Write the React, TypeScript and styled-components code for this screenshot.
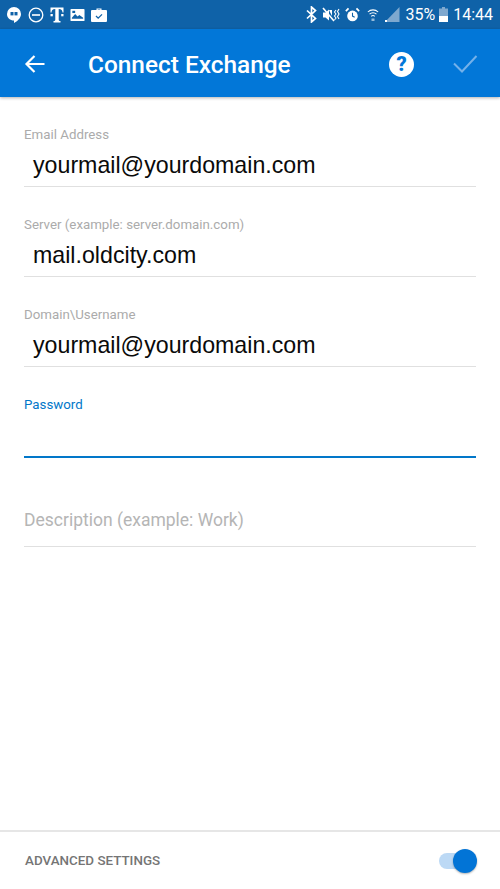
import { createGlobalStyle, styled } from "styled-components";

const GlobalStyle = createGlobalStyle`
  html, body {
    margin: 0;
    padding: 0;
    background: #fff;
  }
  body {
    font-family: Roboto, "Liberation Sans", sans-serif;
  }
`;

interface FieldProps {
  label: string;
  value?: string;
  focused?: boolean;
}

const Field = ({ label, value, focused }: FieldProps) => (
  <FieldBox $focused={focused}>
    <FieldLabel $focused={focused}>{label}</FieldLabel>
    <FieldValue>{value}</FieldValue>
  </FieldBox>
);

export default function App() {
  return (
    <Screen>
      <GlobalStyle />
      <StatusBar>
        <StatusGroup>
          <svg width="16" height="18" viewBox="0 0 16 18">
            <path d="M8 1a7 7 0 0 0-7 7c0 3.9 3.1 6.6 7 6.6V17c3.4-1.700 7-5 7-9a7 7 0 0 0-7-7z" fill="#fff" />
            <rect x="4.500" y="6" width="3" height="3.400" fill="#0f62a8" />
            <rect x="8.500" y="6" width="3" height="3.400" fill="#0f62a8" />
          </svg>
          <svg width="16" height="16" viewBox="0 0 16 16">
            <circle cx="8" cy="8" r="6.800" fill="none" stroke="#fff" strokeWidth="1.300" />
            <rect x="4" y="7.200" width="8" height="1.600" fill="#fff" />
          </svg>
          <svg width="14" height="16" viewBox="0 0 14 16">
            <path d="M0.500 0.500h13v5h-1c0-2-1-3.300-3.800-3.500v10.500c0 1.200.5 1.500 1.800 1.500v1.500h-7v-1.500c1.300 0 1.800-.3 1.800-1.500V2C2.500 2.200 1.500 3.500 1.500 5.500h-1z" fill="#fff" />
            <rect x="0.500" y="7" width="2.300" height="2.300" fill="#fff" />
            <rect x="11.200" y="7" width="2.300" height="2.300" fill="#fff" />
          </svg>
          <svg width="15" height="14" viewBox="0 0 16 14">
            <rect x="0.500" y="0.500" width="15" height="13" rx="1" fill="#fff" />
            <path d="M2 10l3.500-4 2.500 2.500 2-1.500 4 3v1H2z" fill="#0f62a8" />
            <rect x="2.500" y="2.500" width="3" height="2.400" fill="#0f62a8" />
          </svg>
          <svg width="16" height="16" viewBox="0 0 16 16">
            <path d="M5.500 3V1.500h5V3H15a1 1 0 0 1 1 1v10a1 1 0 0 1-1 1H1a1 1 0 0 1-1-1V4a1 1 0 0 1 1-1zM6.700 3h2.600v-.6H6.700z" fill="#fff" />
            <path d="M5 9l2.200 2.200L11 7.400" fill="none" stroke="#0f62a8" strokeWidth="1.300" />
          </svg>
        </StatusGroup>
        <StatusGroup $right>
          <svg width="11" height="17" viewBox="0 0 11 17">
            <path d="M1 4.500l8.500 8L5.500 16V1l4 3.500-8.500 8" fill="none" stroke="#fff" strokeWidth="1.700" />
          </svg>
          <svg width="18" height="16" viewBox="0 0 18 16">
            <path d="M1 1l11 13" stroke="#fff" strokeWidth="1.600" />
            <path d="M1 5.500h2.500L7 2.500v11L3.500 10.500H1zM7 3h3v6z" fill="#fff" />
            <path d="M14 3l-1.500 2 1.500 2-1.500 2 1.500 2-1.500 2M17 2l-1.500 2.500 1.500 2.500-1.500 2.500 1.500 2.500" fill="none" stroke="#fff" strokeWidth="1.100" />
          </svg>
          <svg width="15" height="16" viewBox="0 0 17 17">
            <circle cx="8.500" cy="9.500" r="6" fill="#fff" />
            <path d="M8.500 6v3.700l2.500 1.300" fill="none" stroke="#0f62a8" strokeWidth="1.200" />
            <path d="M1 4l3-3M16 4l-3-3" stroke="#fff" strokeWidth="2" />
          </svg>
          <WifiSlot>
            <svg width="12" height="16" viewBox="0 0 14 17">
              <path d="M1 5a8.500 8.500 0 0 1 12 0M3 7.500a5.500 5.500 0 0 1 8 0M5 10a2.800 2.800 0 0 1 4 0" fill="none" stroke="#fff" strokeWidth="1.200" />
              <path d="M5.500 12.500h1v3h-1zM7.500 12.500h1v3h-1z" fill="#fff" />
            </svg>
          </WifiSlot>
          <svg width="16" height="17" viewBox="0 0 16 17">
            <path d="M15.500 1v15H1z" fill="#7ea8cf" />
            <path d="M1 14h2v2H1z" fill="#fff" />
          </svg>
          <StatusText>35%</StatusText>
          <BatterySlot>
            <svg width="9" height="15" viewBox="0 0 9 15">
              <path d="M3 0h3v1.500h3V15H0V1.500h3z" fill="#7ea8cf" />
              <path d="M0 9h9v6H0z" fill="#fff" />
            </svg>
          </BatterySlot>
          <StatusText>14:44</StatusText>
        </StatusGroup>
      </StatusBar>

      <AppBar>
        <BackButton>
          <svg width="22" height="20" viewBox="0 0 22 20">
            <path d="M20.500 10H2.500M10.500 2l-8 8 8 8" fill="none" stroke="#fff" strokeWidth="2.200" />
          </svg>
        </BackButton>
        <Title>Connect Exchange</Title>
        <HelpIcon>?</HelpIcon>
        <DoneButton>
          <svg width="26" height="20" viewBox="0 0 26 20">
            <path d="M2 9.500l8 8L24.500 2" fill="none" stroke="#74b1ea" strokeWidth="2" />
          </svg>
        </DoneButton>
      </AppBar>

      <Form>
        <Field label="Email Address" value="yourmail@yourdomain.com" />
        <Field label="Server (example: server.domain.com)" value="mail.oldcity.com" />
        <Field label="Domain\Username" value="yourmail@yourdomain.com" />
        <Field label="Password" focused />
        <Placeholder>Description (example: Work)</Placeholder>
      </Form>

      <Footer>
        <FooterLabel>ADVANCED SETTINGS</FooterLabel>
        <Toggle>
          <ToggleKnob />
        </Toggle>
      </Footer>
    </Screen>
  );
}

const Screen = styled.div`
  width: 500px;
  height: 889px;
  display: flex;
  flex-direction: column;
  background: #fff;
  overflow: hidden;
`;

const StatusBar = styled.header`
  height: 29px;
  flex: none;
  display: flex;
  align-items: center;
  justify-content: space-between;
  padding: 0 7px 0 6px;
  background: #0f62a8;
  color: #fff;
`;

const StatusGroup = styled.div<{ $right?: boolean }>`
  display: flex;
  align-items: center;
  gap: ${(p) => (p.$right ? "5px" : "6px")};
`;

const WifiSlot = styled.span`
  display: flex;
  margin-left: 2px;
`;

const BatterySlot = styled.span`
  display: flex;
  margin-left: -1px;
`;

const StatusText = styled.span`
  font-size: 16px;
  line-height: 20px;
`;

const AppBar = styled.div`
  height: 68px;
  flex: none;
  box-sizing: border-box;
  display: flex;
  align-items: center;
  padding: 2px 22px 0 24px;
  background: #0277d8;
  box-shadow: 0 1px 3px rgba(0, 0, 0, 0.3);
  color: #fff;
`;

const IconButton = styled.span`
  display: flex;
  align-items: center;
  justify-content: center;
`;

const BackButton = styled(IconButton)`
  margin-right: 42px;
`;

const Title = styled.h1`
  flex: 1;
  margin: 0;
  font-size: 24.400px;
  font-weight: 500;
`;

const HelpIcon = styled.span`
  width: 25px;
  height: 25px;
  margin-right: 38px;
  border-radius: 50%;
  background: #fff;
  color: #0277d8;
  font-size: 20px;
  font-weight: 900;
  line-height: 25px;
  text-align: center;
`;

const DoneButton = styled(IconButton)``;

const Form = styled.main`
  flex: 1;
  display: flex;
  flex-direction: column;
  padding: 28px 24px 0;
`;

const FieldBox = styled.div<{ $focused?: boolean }>`
  height: ${(p) => (p.$focused ? "63px" : "62px")};
  margin-bottom: ${(p) => (p.$focused ? "27px" : "28px")};
  box-sizing: border-box;
  border-bottom: ${(p) => (p.$focused ? "2px solid #0277c9" : "1px solid #e0e0e0")};
`;

const FieldLabel = styled.div<{ $focused?: boolean }>`
  height: 18px;
  font-size: 13.300px;
  line-height: 19px;
  color: ${(p) => (p.$focused ? "#0277c9" : "#ababab")};
`;

const FieldValue = styled.div`
  height: 43px;
  padding-left: 9px;
  font-family: "Liberation Sans", Arial, sans-serif;
  font-size: 23.200px;
  line-height: 45px;
  color: #0a0a0a;
`;

const Placeholder = styled.div`
  height: 40px;
  margin-top: 22px;
  box-sizing: border-box;
  border-bottom: 1px solid #e0e0e0;
  font-size: 17.500px;
  line-height: 26px;
  color: #b5b5b5;
`;

const Footer = styled.footer`
  height: 59px;
  flex: none;
  box-sizing: border-box;
  display: flex;
  align-items: center;
  justify-content: space-between;
  padding: 0 24px 0 25px;
  border-top: 2px solid #e6e6e6;
`;

const FooterLabel = styled.span`
  font-size: 13.400px;
  font-weight: 500;
  color: #757575;
`;

const Toggle = styled.span`
  position: relative;
  width: 36px;
  height: 16px;
  margin-right: 1px;
  border-radius: 8px;
  background: #bcd9f5;
`;

const ToggleKnob = styled.span`
  position: absolute;
  top: -4px;
  right: -2px;
  width: 24px;
  height: 24px;
  border-radius: 50%;
  background: #0274d6;
  box-shadow: 0 1px 2px rgba(0, 0, 0, 0.3);
`;
